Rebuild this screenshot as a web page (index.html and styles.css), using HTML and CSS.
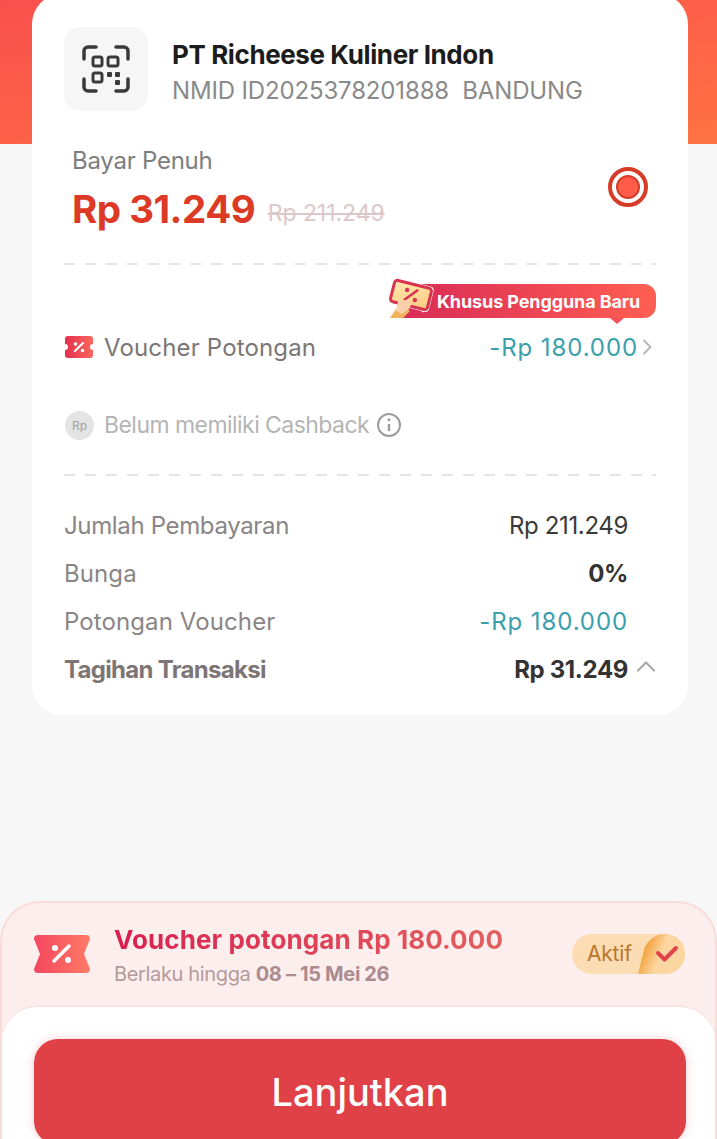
FILE: index.html
```html
<!DOCTYPE html>
<html lang="id">
<head>
    <meta charset="UTF-8">
    <meta name="viewport" content="width=device-width, initial-scale=1.0">
    <title>Pembayaran</title>
    <link rel="stylesheet" href="styles.css">
</head>
<body>
    <main class="page">
        <section class="card">
            <div class="merchant">
                <div class="merchant-icon">
                    <svg width="48" height="48" viewBox="0 0 48 48" fill="none" stroke="#3a3a3a" stroke-width="3.500" stroke-linecap="round" stroke-linejoin="round">
                        <path d="M2 14V6a4 4 0 0 1 4-4h8M34 2h8a4 4 0 0 1 4 4v8M2 34v8a4 4 0 0 0 4 4h8M46 34v8a4 4 0 0 1-4 4h-8"/>
                        <g stroke-width="3">
                            <rect x="11" y="12" width="9" height="9" rx="2"/>
                            <rect x="26" y="12" width="10" height="9" rx="2"/>
                            <rect x="11" y="28" width="9" height="9" rx="2"/>
                        </g>
                        <g fill="#3a3a3a" stroke="none">
                            <rect x="25" y="27" width="5" height="5" rx="1"/>
                            <rect x="33" y="27" width="5" height="5" rx="1"/>
                            <rect x="33" y="35" width="5" height="5" rx="1"/>
                        </g>
                    </svg>
                </div>
                <div class="merchant-text">
                    <h1 class="merchant-name">PT Richeese Kuliner Indon</h1>
                    <p class="merchant-id">NMID ID2025378201888&nbsp; BANDUNG</p>
                </div>
            </div>

            <div class="plan">
                <div>
                    <p class="plan-label">Bayar Penuh</p>
                    <p class="plan-price"><strong>Rp 31.249</strong> <s>Rp 211.249</s></p>
                </div>
                <span class="radio"></span>
            </div>

            <hr class="dash">

            <div class="tip-row">
                <div class="tip">
                    <svg class="tip-art" width="50" height="42" viewBox="0 0 50 42">
                        <defs>
                            <linearGradient id="ticketPaper" x1="0" x2="1" y1="0" y2="1">
                                <stop offset="0" stop-color="#ffe9b0"/>
                                <stop offset="1" stop-color="#ffc97e"/>
                            </linearGradient>
                        </defs>
                        <path d="M2 41l6-9 9-2 5 4-7 7z" fill="#f1b45c"/>
                        <path d="M41 14c1 7-1 14-6 20" fill="none" stroke="#fff" stroke-width="2.500" stroke-linecap="round"/>
                        <g transform="rotate(14 23 18)">
                            <rect x="2" y="5" width="42" height="26" rx="4" fill="#fff"/>
                            <rect x="4" y="7" width="38" height="22" rx="3" fill="url(#ticketPaper)" stroke="#d8344f" stroke-width="3"/>
                            <path d="M18 24l10-12" stroke="#d8344f" stroke-width="2.500" stroke-linecap="round"/>
                            <circle cx="18" cy="14" r="2.200" fill="#d8344f"/>
                            <circle cx="28" cy="22" r="2.200" fill="#d8344f"/>
                        </g>
                        <path d="M10 24c5-2 11-1 14 2l-3 6-7 5-6-3z" fill="#fbd0a8"/>
                    </svg>
                    <span>Khusus Pengguna Baru</span>
                </div>
            </div>

            <div class="voucher-row">
                <div class="voucher-label">
                    <svg width="30" height="22" viewBox="0 0 30 22">
                        <defs>
                            <linearGradient id="ticketSmall" x1="0" x2="1">
                                <stop offset="0" stop-color="#e5304f"/>
                                <stop offset="1" stop-color="#f9685c"/>
                            </linearGradient>
                        </defs>
                        <path d="M4 0h22a3 3 0 0 1 3 3v5a3 3 0 0 0 0 6v5a3 3 0 0 1-3 3H4a3 3 0 0 1-3-3v-5a3 3 0 0 0 0-6V3a3 3 0 0 1 3-3z" fill="url(#ticketSmall)"/>
                        <path d="M11 15l8-8" stroke="#fff" stroke-width="2.200" stroke-linecap="round"/>
                        <circle cx="11.500" cy="8" r="1.800" fill="#fff"/>
                        <circle cx="18.500" cy="14.500" r="1.800" fill="#fff"/>
                    </svg>
                    <span>Voucher Potongan</span>
                </div>
                <div class="voucher-value">
                    <span>-Rp 180.000</span>
                    <svg width="10" height="16" viewBox="0 0 10 16" fill="none" stroke="#b5b5b5" stroke-width="1.800" stroke-linecap="round" stroke-linejoin="round"><path d="M2 1.500L8.500 8 2 14.500"/></svg>
                </div>
            </div>

            <div class="cashback">
                <span class="cashback-badge">Rp</span>
                <span>Belum memiliki Cashback</span>
                <svg class="info" width="26" height="26" viewBox="0 0 26 26" fill="none" stroke="#9c9c9c" stroke-width="2">
                    <circle cx="13" cy="13" r="11"/>
                    <path d="M13 12v7" stroke-width="2.400"/>
                    <circle cx="13" cy="7.800" r="1.500" fill="#9c9c9c" stroke="none"/>
                </svg>
            </div>

            <hr class="dash">

            <dl class="summary">
                <div class="summary-row">
                    <dt>Jumlah Pembayaran</dt>
                    <dd>Rp 211.249</dd>
                </div>
                <div class="summary-row">
                    <dt class="wide">Bunga</dt>
                    <dd class="bold">0%</dd>
                </div>
                <div class="summary-row">
                    <dt class="wide">Potongan Voucher</dt>
                    <dd class="teal">-Rp 180.000</dd>
                </div>
                <div class="summary-row total">
                    <dt>Tagihan Transaksi</dt>
                    <dd class="bold">Rp 31.249</dd>
                    <svg class="caret" width="20" height="12" viewBox="0 0 20 12" fill="none" stroke="#a8a8a8" stroke-width="2.200" stroke-linecap="round" stroke-linejoin="round"><path d="M2 10.500L10 2.500l8 8"/></svg>
                </div>
            </dl>
        </section>

        <footer class="bottom">
            <div class="promo">
                <svg width="58" height="40" viewBox="0 0 58 40">
                    <defs>
                        <linearGradient id="ticketBig" x1="0" x2="1">
                            <stop offset="0" stop-color="#f4475f"/>
                            <stop offset="1" stop-color="#ff7a66"/>
                        </linearGradient>
                    </defs>
                    <path d="M5 1h48a4 4 0 0 1 4 4l-6 15 6 15a4 4 0 0 1-4 4H5a4 4 0 0 1-4-4l6-15L1 5a4 4 0 0 1 4-4z" fill="url(#ticketBig)"/>
                    <path d="M21 27l15-15" stroke="#fff" stroke-width="3.500" stroke-linecap="round"/>
                    <circle cx="22" cy="14" r="3" fill="#fff"/>
                    <circle cx="35" cy="26" r="3" fill="#fff"/>
                </svg>
                <div class="promo-text">
                    <p class="promo-title">Voucher potongan Rp 180.000</p>
                    <p class="promo-date">Berlaku hingga <b>08 – 15 Mei 26</b></p>
                </div>
                <div class="pill">
                    <span class="pill-label">Aktif</span>
                    <span class="pill-check">
                        <svg width="24" height="18" viewBox="0 0 24 18" fill="none" stroke="#e0434c" stroke-width="4" stroke-linecap="round" stroke-linejoin="round"><path d="M3 8l6.500 6.500L21 3"/></svg>
                    </span>
                </div>
            </div>
            <div class="sheet">
                <button class="btn" type="button">Lanjutkan</button>
            </div>
        </footer>
    </main>
</body>
</html>
```

FILE: styles.css
```css
* {
    box-sizing: border-box;
}
html, body {
    margin: 0;
    height: 1139px;
    overflow: hidden;
}
body {
    font-family: 'Inter', 'Noto Sans', Arial, sans-serif;
    color: #333;
    background-color: #f7f7f7;
}
p, h1, dl, dd {
    margin: 0;
}
.page {
    height: 1139px;
    display: flex;
    flex-direction: column;
    background: linear-gradient(170deg, #f9504e, #ff7242) no-repeat;
    background-size: 100% 144px;
}
.card {
    width: 656px;
    height: 721px;
    margin: -6px 0 0 32px;
    padding: 33px 32px 0;
    background: #fff;
    border-radius: 30px;
}
.merchant {
    display: flex;
    align-items: center;
    gap: 24px;
}
.merchant-icon {
    width: 84px;
    height: 84px;
    display: flex;
    align-items: center;
    justify-content: center;
    background: #f6f6f6;
    border-radius: 16px;
}
.merchant-text {
    padding-top: 7px;
}
.merchant-name {
    font-size: 26px;
    line-height: 34px;
    font-weight: 700;
    letter-spacing: -0.4px;
    color: #1c1c1c;
}
.merchant-id {
    margin-top: 2px;
    font-size: 24px;
    line-height: 34px;
    letter-spacing: -0.15px;
    color: #8a8a8a;
}
.plan {
    display: flex;
    justify-content: space-between;
    align-items: flex-start;
    margin-top: 33px;
    padding: 0 8px;
}
.plan-label {
    font-size: 24px;
    line-height: 34px;
    letter-spacing: -0.25px;
    color: #7d7d7d;
}
.plan-price {
    margin-top: 3px;
    line-height: 56px;
}
.plan-price strong {
    font-size: 38.500px;
    font-weight: 700;
    letter-spacing: -0.5px;
    color: #dd3a26;
}
.plan-price s {
    margin-left: 8px;
    font-size: 23px;
    letter-spacing: -0.05px;
    vertical-align: 2px;
    color: #dcc8c8;
}
.radio {
    width: 40px;
    height: 40px;
    margin-top: 23px;
    border: 4px solid #d63c28;
    border-radius: 50%;
    background: #fff;
    display: flex;
    align-items: center;
    justify-content: center;
}
.radio::after {
    content: "";
    width: 20px;
    height: 20px;
    border-radius: 50%;
    border: 2px solid #d63c28;
    background: #ff5c4a;
}
.dash {
    height: 2px;
    margin: 0;
    border: 0;
    background: repeating-linear-gradient(90deg, #e4e4e4 0 11px, transparent 11px 21px);
}
.plan + .dash {
    margin-top: 18px;
}
.tip-row {
    display: flex;
    justify-content: flex-end;
    margin-top: 19px;
}
.tip {
    position: relative;
    width: 258px;
    height: 34px;
    padding-left: 39px;
    display: flex;
    align-items: center;
    background: linear-gradient(90deg, #d92a57, #ff5f52);
    border-radius: 0 12px 12px 0;
    color: #fff;
    font-size: 18px;
    font-weight: 700;
    letter-spacing: -0.1px;
}
/* little pointer under the tooltip */
.tip::after {
    content: "";
    position: absolute;
    right: 32px;
    bottom: -6px;
    width: 0;
    height: 0;
    border-left: 7px solid transparent;
    border-right: 7px solid transparent;
    border-top: 6px solid #f4505a;
}
.tip-art {
    position: absolute;
    left: -10px;
    top: -7px;
}
.voucher-row {
    display: flex;
    justify-content: space-between;
    align-items: center;
    height: 34px;
    margin-top: 12px;
}
.voucher-label {
    display: flex;
    align-items: center;
    gap: 10px;
    font-size: 24px;
    letter-spacing: 0.15px;
    color: #7b7676;
}
.voucher-value {
    display: flex;
    align-items: center;
    gap: 4px;
    padding-right: 4px;
    font-size: 24px;
    letter-spacing: 0.9px;
    color: #3aa0ad;
}
.cashback {
    display: flex;
    align-items: center;
    margin-top: 44px;
    height: 34px;
    gap: 10px;
    font-size: 23px;
    letter-spacing: -0.55px;
    color: #b4b4b4;
}
.cashback-badge {
    width: 29px;
    height: 29px;
    margin-left: 1px;
    display: flex;
    align-items: center;
    justify-content: center;
    border-radius: 50%;
    background: #e4e4e4;
    font-size: 12px;
    letter-spacing: 0;
    color: #a2a2a2;
}
.info {
    margin-left: -3px;
}
.cashback + .dash {
    margin-top: 32px;
}
.summary {
    margin-top: 25px;
}
.summary-row {
    display: flex;
    align-items: center;
    height: 48px;
    padding-right: 28px;
    font-size: 24px;
    letter-spacing: -0.35px;
    color: #8a8585;
}
.summary-row dt {
    flex: 1;
}
.summary-row dt.wide {
    letter-spacing: 0.1px;
}
.summary-row dd {
    color: #3a3a3a;
}
.summary-row .bold {
    font-weight: 700;
    color: #333;
}
.summary-row .teal {
    letter-spacing: 0.9px;
    color: #3aa0ad;
}
.total dt {
    font-weight: 700;
    letter-spacing: -0.7px;
    color: #7d7575;
}
.caret {
    position: relative;
    margin-right: -28px;
    margin-left: 8px;
    top: -3px;
}
.bottom {
    margin-top: auto;
    height: 238px;
    display: flex;
    flex-direction: column;
    background: #fdeeee;
    border: 2px solid #f9dcda;
    border-bottom: 0;
    border-radius: 40px 40px 0 0;
}
.promo {
    display: flex;
    align-items: center;
    height: 102px;
    flex-shrink: 0;
    padding: 0 30px 0 31px;
}
.promo-text {
    flex: 1;
    margin-left: 23px;
    padding-top: 3px;
}
.promo-title {
    display: inline-block;
    font-size: 26px;
    line-height: 34px;
    font-weight: 700;
    letter-spacing: 0.1px;
    background: linear-gradient(90deg, #d9204f, #e2605f);
    -webkit-background-clip: text;
    background-clip: text;
    color: transparent;
}
.promo-date {
    margin-top: 2px;
    font-size: 20px;
    line-height: 30px;
    letter-spacing: -0.35px;
    color: #b49a9a;
}
.promo-date b {
    font-weight: 700;
    color: #ab8b8e;
}
.pill {
    width: 113px;
    height: 40px;
    display: flex;
    overflow: hidden;
    border-radius: 20px;
    background: #fcdcb2;
}
.pill-label {
    flex: 1;
    padding-left: 15px;
    line-height: 40px;
    font-size: 21px;
    letter-spacing: -0.2px;
    color: #b8762e;
}
.pill-check {
    width: 47px;
    display: flex;
    align-items: center;
    justify-content: center;
    background: linear-gradient(100deg, #f3a23e 5%, #fcd6a0 40%);
    border-radius: 16px 0 0 0;
    transform: skewX(-14deg);
    transform-origin: bottom;
}
.pill-check svg {
    transform: skewX(14deg);
}
.sheet {
    flex: 1;
    background: #fff;
    border-top: 2px solid #f5e4e3;
    border-radius: 36px 36px 0 0;
    padding: 32px 29px 0 32px;
}
.btn {
    display: block;
    width: 100%;
    height: 106px;
    border: 0;
    padding: 0;
    background: #df4146;
    border-radius: 24px;
    box-shadow: 0 0 10px rgba(223, 65, 70, 0.25);
    color: #fff;
    font-family: inherit;
    font-size: 38px;
    font-weight: 500;
    text-align: center;
}
```
